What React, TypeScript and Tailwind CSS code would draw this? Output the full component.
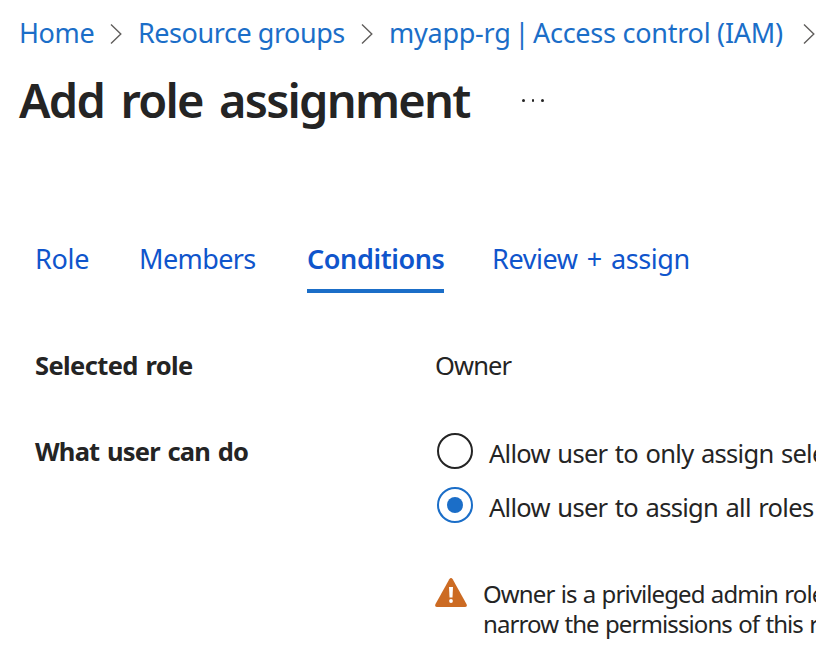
import React from "react";

function Crumb({ children, className }: { children: React.ReactNode; className: string }) {
  return <a className={`-mt-0.5 block shrink-0 text-[27px] leading-9 text-[#1b6ec8] ${className}`}>{children}</a>;
}

function Chevron({ className }: { className: string }) {
  return (
    <svg className={`-mt-px h-5 w-3 shrink-0 ${className}`} viewBox="0 0 12 20" fill="none" stroke="#605e5c" strokeWidth="1.4">
      <path d="M1 .5 10.8 10 1 19.5" />
    </svg>
  );
}

function Radio({ checked, label }: { checked?: boolean; label: string }) {
  return (
    <label className="flex h-[54px] items-start">
      <span
        className={`ml-0.5 flex size-9 shrink-0 items-center justify-center rounded-full border-2 ${checked ? "border-[#1b6ec8]" : "border-[#242424]"}`}
      >
        {checked && <span className="size-4 rounded-full bg-[#1b6ec8]" />}
      </span>
      <span className="ml-4 mt-0.5 leading-9 tracking-[-0.7px] [word-spacing:1.5px]">{label}</span>
    </label>
  );
}

export default function App() {
  return (
    <main className="h-[659px] w-[816px] overflow-hidden whitespace-nowrap bg-white font-['Noto_Sans','Open_Sans',sans-serif] text-[25.5px] text-[#242424]">
      <nav className="flex h-[52px] items-center pl-[19px] pt-4">
        <Crumb className="w-[91px] tracking-[-0.4px]">Home</Crumb>
        <Chevron className="mr-4" />
        <Crumb className="w-[223px] tracking-[-0.45px]">Resource groups</Crumb>
        <Chevron className="mr-4" />
        <Crumb className="w-[414px] tracking-[-0.25px]">
          <span className="[word-spacing:-2.9px]">myapp-rg | </span>Access control (IAM)
        </Crumb>
        <Chevron className="" />
      </nav>
      <header className="flex h-[100px] items-start pl-[19px] pt-4">
        <h1 className="w-[503px] text-[47px] font-semibold leading-[64px] tracking-[-1.78px] [word-spacing:6px]">Add role assignment</h1>
        <button aria-label="More" className="mt-[31px] flex gap-[7px]">
          <i className="size-[2.5px] rounded-full bg-[#242424]" />
          <i className="size-[2.5px] rounded-full bg-[#242424]" />
          <i className="size-[2.5px] rounded-full bg-[#242424]" />
        </button>
      </header>
      <div className="flex pl-[35px] pt-[89px] text-[27px] leading-9 text-[#0f55cc]">
        <a className="w-[104px] tracking-[-0.3px]">Role</a>
        <a className="w-[168px] tracking-[-0.6px]">Members</a>
        <a className="mr-12 h-[52px] w-[137px] border-b-4 border-[#1b6ec8] font-semibold tracking-[-0.4px]">Conditions</a>
        <a className="tracking-[-0.4px] [word-spacing:2.5px]">Review + assign</a>
      </div>
      <div className="flex pl-[35px] pt-[54px] leading-9">
        <div className="w-[400px] font-bold tracking-[-0.6px] [word-spacing:1.5px]">Selected role</div>
        <div className="tracking-[-0.9px]">Owner</div>
      </div>
      <div className="flex pl-[35px] pt-[50px] leading-9">
        <div className="w-[400px] shrink-0 font-bold tracking-[-0.8px] [word-spacing:1.8px]">What user can do</div>
        <div>
          <Radio label="Allow user to only assign sele" />
          <Radio checked label="Allow user to assign all roles" />
          <div className="flex pt-9">
            <svg className="mt-px h-[30px] w-8 shrink-0" viewBox="0 0 32 30">
              <path d="M14.3 1.2Q16-1 17.7 1.2L31.6 26.2Q32.5 29 29.8 29H2.2Q-.5 29 .4 26.2Z" fill="#cc6b23" />
              <path d="M14 9h4l-.5 10.5h-3Z" fill="#fff" />
              <circle cx="16" cy="23" r="1.9" fill="#fff" />
            </svg>
            <p className="ml-4 mt-0.5 text-[24px] leading-[30px] tracking-[-0.9px] [word-spacing:0.9px]">
              Owner is a privileged admin role
              <br />
              narrow the permissions of this r
            </p>
          </div>
        </div>
      </div>
    </main>
  );
}
